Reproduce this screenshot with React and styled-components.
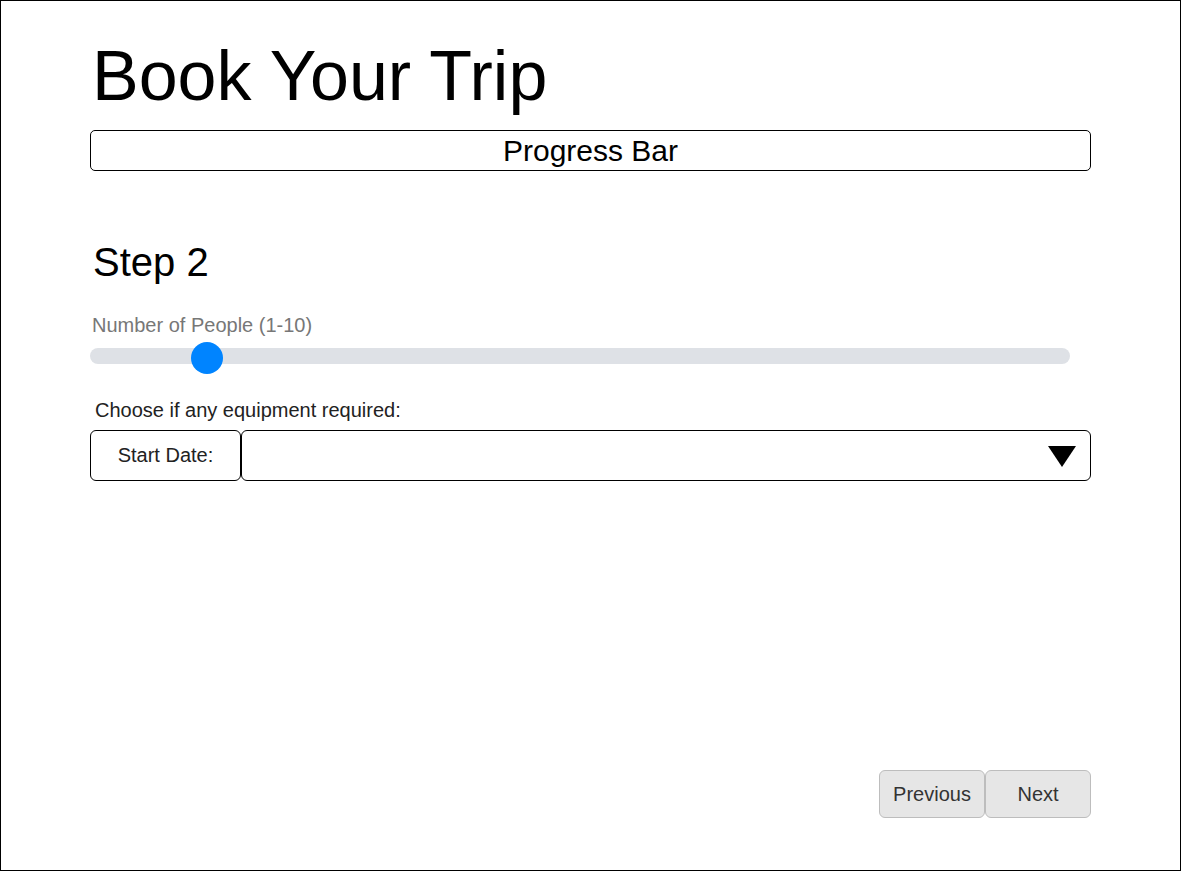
import React from "react";
import styled, { createGlobalStyle } from "styled-components";

const Global = createGlobalStyle`
  html, body { margin: 0; padding: 0; }
  body { font-family: "Liberation Sans", Arial, sans-serif; color: #000; }
  * { box-sizing: border-box; }
`;

const people = 2;

function App() {
  return (
    <>
      <Global />
      <Frame>
        <Content>
          <Title>Book Your Trip</Title>
          <ProgressBox>Progress Bar</ProgressBox>
          <StepTitle>Step 2</StepTitle>
          <SliderLabel>Number of People (1-10)</SliderLabel>
          <Track>
            <Thumb style={{ left: `${(people - 1) * 101}px` }} />
          </Track>
          <FieldLabel>Choose if any equipment required:</FieldLabel>
          <InputRow>
            <Addon>Start Date:</Addon>
            <SelectBox>
              <svg width="28" height="21" viewBox="0 0 28 21">
                <polygon points="0,0 28,0 14,21" fill="#000" />
              </svg>
            </SelectBox>
          </InputRow>
          <Spacer />
          <Buttons>
            <NavButton>Previous</NavButton>
            <NavButton>Next</NavButton>
          </Buttons>
        </Content>
      </Frame>
    </>
  );
}

const Frame = styled.div`
  width: 1181px;
  height: 871px;
  border: 1px solid #000;
  display: flex;
`;

const Content = styled.div`
  width: 1001px;
  margin-left: 89px;
  display: flex;
  flex-direction: column;
  padding-bottom: 52px;
`;

const Title = styled.h1`
  font-size: 70px;
  font-weight: 400;
  margin: 35px 0 0 2px;
  line-height: 80px;
`;

const ProgressBox = styled.div`
  margin-top: 14px;
  height: 41px;
  border: 1px solid #000;
  border-radius: 5px;
  display: flex;
  align-items: center;
  justify-content: center;
  font-size: 30px;
`;

const StepTitle = styled.h2`
  font-size: 40px;
  font-weight: 400;
  margin: 68px 0 0 3px;
  line-height: 46px;
`;

const SliderLabel = styled.div`
  margin: 28px 0 0 2px;
  font-size: 20px;
  color: #777;
  line-height: 24px;
`;

const Track = styled.div`
  position: relative;
  margin-top: 11px;
  width: 980px;
  height: 16px;
  border-radius: 8px;
  background: #dee1e6;
`;

const Thumb = styled.div`
  position: absolute;
  top: -6px;
  width: 32px;
  height: 32px;
  border-radius: 50%;
  background: #0084ff;
`;

const FieldLabel = styled.div`
  margin: 35px 0 0 5px;
  font-size: 20px;
  color: #222;
  line-height: 22px;
`;

const InputRow = styled.div`
  margin-top: 9px;
  display: flex;
  height: 51px;
`;

const Addon = styled.div`
  width: 151px;
  border: 1px solid #000;
  border-radius: 6px;
  display: flex;
  align-items: center;
  justify-content: center;
  font-size: 20px;
  color: #222;
`;

const SelectBox = styled.div`
  flex: 1;
  border: 1px solid #000;
  border-radius: 6px;
  display: flex;
  align-items: center;
  justify-content: flex-end;
  padding: 2px 14px 0 0;
`;

const Spacer = styled.div`
  flex: 1;
`;

const Buttons = styled.div`
  display: flex;
  justify-content: flex-end;
`;

const NavButton = styled.button`
  width: 106px;
  height: 48px;
  background: #e6e6e6;
  border: 1px solid #bdbdbd;
  border-radius: 6px;
  font-family: "Liberation Sans", Arial, sans-serif;
  font-size: 20px;
  color: #333;
  padding: 0;
`;

export default App;
